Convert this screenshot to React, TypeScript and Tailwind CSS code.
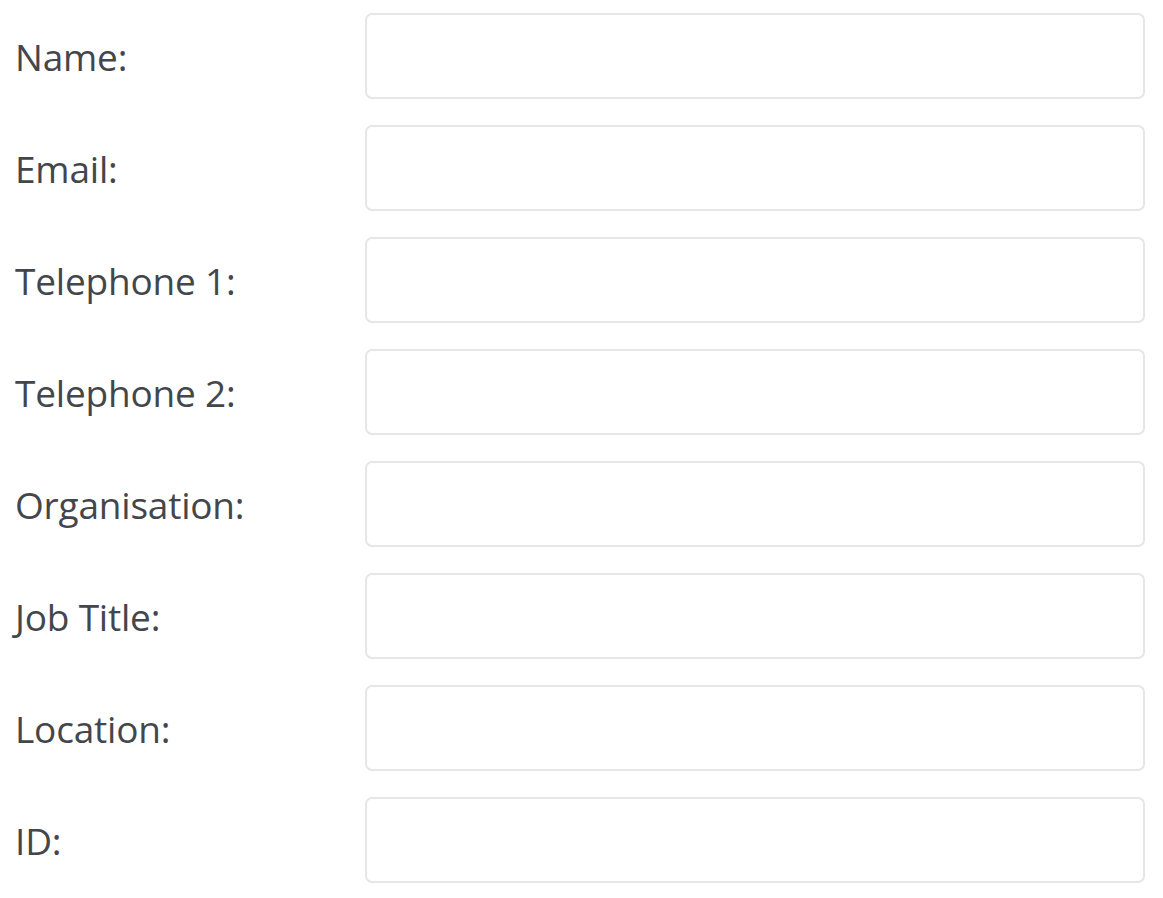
import React from "react";

const fields = [
  "Name:",
  "Email:",
  "Telephone 1:",
  "Telephone 2:",
  "Organisation:",
  "Job Title:",
  "Location:",
  "ID:",
];

export default function App() {
  return (
    <div
      className="w-[1163px] h-[898px] bg-white flex flex-col gap-[26px] pt-[13px] pr-[18px]"
      style={{ fontFamily: '"Open Sans", "Noto Sans", sans-serif' }}
    >
      {fields.map((f) => (
        <div key={f} className="flex items-center h-[86px]">
          <label className="w-[365px] pl-[15px] text-[37px] leading-none text-[#43464b] tracking-[-0.2px]">
            {f}
          </label>
          <input
            type="text"
            className="flex-1 h-[86px] rounded-[7px] border-2 border-[#e6e6e6] bg-white outline-none"
          />
        </div>
      ))}
    </div>
  );
}
